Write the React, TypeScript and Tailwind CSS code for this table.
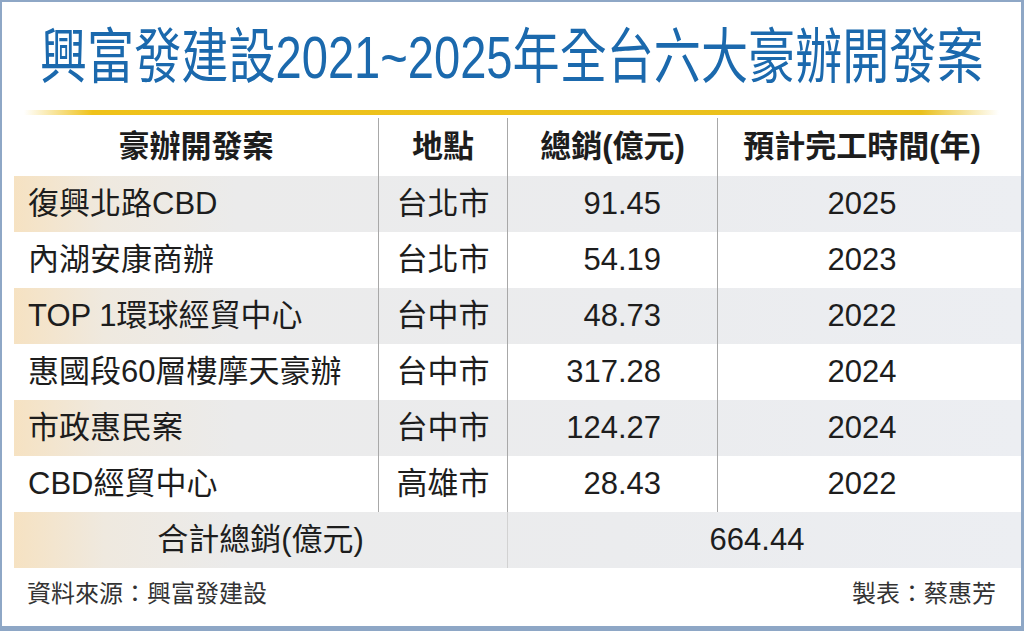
const rows = [
  { name: "復興北路CBD", city: "台北市", sales: "91.45", year: "2025" },
  { name: "內湖安康商辦", city: "台北市", sales: "54.19", year: "2023" },
  { name: "TOP 1環球經貿中心", city: "台中市", sales: "48.73", year: "2022" },
  { name: "惠國段60層樓摩天豪辦", city: "台中市", sales: "317.28", year: "2024" },
  { name: "市政惠民案", city: "台中市", sales: "124.27", year: "2024" },
  { name: "CBD經貿中心", city: "高雄市", sales: "28.43", year: "2022" },
];

const font = "font-['Liberation_Sans','Noto_Sans_CJK_TC',sans-serif]";
const cols = "grid grid-cols-[364px_129px_210px_289px]";
const shade =
  "bg-[linear-gradient(90deg,#f6e2c2_0%,#efe9df_9%,#ebebeb_22%,#ebecee_60%,#eceef2_100%)]";

export default function App() {
  return (
    <div
      className={`w-[1024px] h-[631px] overflow-hidden bg-white border-t-2 border-l-2 border-r-[3px] border-b-[5px] border-[#8ea7c6] flex flex-col ${font}`}
    >
      {/* Title */}
      <div className="h-[108px] pl-[38px] pt-[4px] flex items-center">
        <h1 className="origin-left scale-x-[0.785] whitespace-nowrap text-[60px] leading-none font-normal text-[#1b69ad]">
          興富發建設2021~2025年全台六大豪辦開發案
        </h1>
      </div>

      {/* Gold rule */}
      <div className="h-[5px] mx-[22px] bg-[linear-gradient(90deg,rgba(240,192,20,0)_0%,#efc21a_7%,#e9c01e_92%,rgba(240,192,20,0)_100%)]" />

      {/* Table */}
      <div className="ml-[12px] mt-[3px] text-[#1d1d1d]">
        <div className={`${cols} h-[58px] text-[31px] font-bold`}>
          <div className="flex items-center justify-center">豪辦開發案</div>
          <div className="flex items-center justify-center border-l border-[#a8a8a8]">地點</div>
          <div className="flex items-center justify-center border-l border-[#a8a8a8]">總銷(億元)</div>
          <div className="flex items-center justify-center border-l border-[#a8a8a8]">預計完工時間(年)</div>
        </div>

        {rows.map((r, i) => (
          <div
            key={r.name}
            className={`${cols} h-[56px] text-[31px] ${i % 2 === 0 ? shade : ""}`}
          >
            <div className="flex items-center pl-[14px] whitespace-nowrap">{r.name}</div>
            <div className="flex items-center justify-center border-l border-[#a8a8a8]">{r.city}</div>
            <div className="flex items-center justify-end pr-[56px] border-l border-[#a8a8a8]">{r.sales}</div>
            <div className="flex items-center justify-center border-l border-[#a8a8a8]">{r.year}</div>
          </div>
        ))}

        <div className={`grid grid-cols-[493px_499px] h-[56px] text-[31px] ${shade}`}>
          <div className="flex items-center justify-center">合計總銷(億元)</div>
          <div className="flex items-center justify-center border-l border-[#d2d2d2]">664.44</div>
        </div>
      </div>

      {/* Footer */}
      <div className="flex justify-between px-[25px] pt-[8px] text-[24px] text-[#333]">
        <span>資料來源：興富發建設</span>
        <span>製表：蔡惠芳</span>
      </div>
    </div>
  );
}
